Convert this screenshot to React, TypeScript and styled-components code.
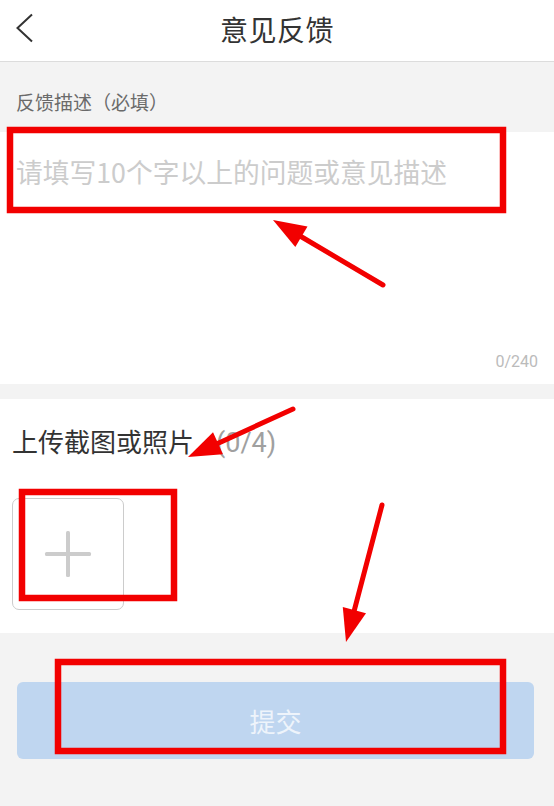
import React from "react";
import styled, { createGlobalStyle } from "styled-components";

const GlobalStyle = createGlobalStyle`
  html, body {
    margin: 0;
    padding: 0;
    background: #f3f3f3;
  }
  body {
    font-family: "Noto Sans CJK SC", "Noto Sans", sans-serif;
  }
  * { box-sizing: border-box; }
`;

const Page = styled.div`
  position: relative;
  width: 554px;
  min-height: 806px;
  background: #f3f3f3;
  display: flex;
  flex-direction: column;
  overflow: hidden;
`;

const Header = styled.header`
  position: relative;
  height: 62px;
  background: #ffffff;
  border-bottom: 1px solid #dcdcdc;
  display: flex;
  align-items: center;
  justify-content: center;
  padding-bottom: 4px;
`;

const BackButton = styled.button`
  position: absolute;
  left: 10px;
  top: 8px;
  width: 30px;
  height: 40px;
  padding: 0;
  border: none;
  background: transparent;
  display: flex;
  align-items: center;
  justify-content: center;
`;

const Title = styled.h1`
  margin: 0;
  font-size: 28px;
  font-weight: 400;
  color: #333333;
  line-height: 36px;
  letter-spacing: 0.5px;
`;

const SectionLabel = styled.div`
  height: 70px;
  padding: 27px 0 0 16px;
  font-size: 19px;
  line-height: 26px;
  color: #6a6a6a;
`;

const DescriptionCard = styled.div`
  background: #ffffff;
  height: 252px;
  display: flex;
  flex-direction: column;
  padding: 22px 16px 12px 16px;
`;

const TextArea = styled.textarea`
  flex: 1;
  border: none;
  outline: none;
  resize: none;
  padding: 0;
  margin: 0;
  background: transparent;
  font-family: "Noto Sans CJK SC", "Noto Sans", sans-serif;
  font-size: 26.75px;
  line-height: 36px;
  color: #333;
  &::placeholder {
    color: #cccccc;
  }
`;

const Counter = styled.div`
  align-self: flex-end;
  font-family: Roboto, "Noto Sans", sans-serif;
  font-size: 16px;
  line-height: 20px;
  color: #bbbbbb;
`;

const Divider = styled.div`
  height: 15px;
`;

const UploadCard = styled.div`
  background: #ffffff;
  height: 234px;
  padding: 24px 12px 0 12px;
  display: flex;
  flex-direction: column;
`;

const UploadTitle = styled.div`
  font-size: 26px;
  line-height: 36px;
  color: #333333;
`;

const UploadCount = styled.span`
  margin-left: 22px;
  font-family: Roboto, "Noto Sans", sans-serif;
  font-size: 27px;
  color: #a0a0a0;
`;

const AddBox = styled.button`
  margin-top: 37px;
  width: 112px;
  height: 112px;
  border: 1px solid #cccccc;
  border-radius: 7px;
  background: #ffffff;
  padding: 0;
  display: flex;
  align-items: center;
  justify-content: center;
`;

const Footer = styled.div`
  flex: 1;
  padding: 49px 20px 0 17px;
`;

const SubmitButton = styled.button`
  width: 100%;
  height: 77px;
  border: none;
  border-radius: 6px;
  background: #bfd6f0;
  color: #eef4fb;
  font-family: "Noto Sans CJK SC", "Noto Sans", sans-serif;
  font-size: 26px;
  display: flex;
  align-items: center;
  justify-content: center;
`;

const Annotations = styled.svg`
  position: absolute;
  left: 0;
  top: 0;
  width: 554px;
  height: 806px;
  pointer-events: none;
`;

type Arrow = { tail: [number, number]; tip: [number, number] };

const arrows: Arrow[] = [
  { tail: [383, 285], tip: [273, 220] },
  { tail: [293, 409], tip: [188, 457] },
  { tail: [382, 505], tip: [346, 642] },
];

function ArrowMark({ tail, tip }: Arrow) {
  const dx = tip[0] - tail[0];
  const dy = tip[1] - tail[1];
  const len = Math.hypot(dx, dy);
  const ux = dx / len;
  const uy = dy / len;
  const headLen = 33;
  const half = 12;
  const bx = tip[0] - ux * headLen;
  const by = tip[1] - uy * headLen;
  const px = -uy * half;
  const py = ux * half;
  return (
    <g>
      <line
        x1={tail[0]}
        y1={tail[1]}
        x2={bx + ux * 4}
        y2={by + uy * 4}
        stroke="#f20000"
        strokeWidth={5}
        strokeLinecap="round"
      />
      <polygon
        points={`${tip[0]},${tip[1]} ${bx + px},${by + py} ${bx - px},${by - py}`}
        fill="#f20000"
      />
    </g>
  );
}

export default function App() {
  return (
    <>
      <GlobalStyle />
      <Page>
        <Header>
          <BackButton aria-label="返回">
            <svg width="18" height="30" viewBox="0 0 18 30">
              <polyline
                points="16,1.5 1.5,15 16,28.5"
                fill="none"
                stroke="#333"
                strokeWidth="2"
              />
            </svg>
          </BackButton>
          <Title>意见反馈</Title>
        </Header>

        <SectionLabel>反馈描述（必填）</SectionLabel>

        <DescriptionCard>
          <TextArea placeholder="请填写10个字以上的问题或意见描述" />
          <Counter>0/240</Counter>
        </DescriptionCard>

        <Divider />

        <UploadCard>
          <UploadTitle>
            上传截图或照片<UploadCount>(0/4)</UploadCount>
          </UploadTitle>
          <AddBox aria-label="添加图片">
            <svg width="48" height="48" viewBox="0 0 48 48">
              <rect x="1" y="22" width="46" height="4" rx="1.5" fill="#cccccc" />
              <rect x="22" y="1" width="4" height="46" rx="1.5" fill="#cccccc" />
            </svg>
          </AddBox>
        </UploadCard>

        <Footer>
          <SubmitButton>提交</SubmitButton>
        </Footer>

        <Annotations viewBox="0 0 554 806">
          <rect x="10" y="130" width="493" height="80" fill="none" stroke="#f20000" strokeWidth="6.5" />
          <rect x="22" y="492" width="152" height="106" fill="none" stroke="#f20000" strokeWidth="6.5" />
          <rect x="58" y="662" width="445" height="89" fill="none" stroke="#f20000" strokeWidth="6.5" />
          {arrows.map((a, i) => (
            <ArrowMark key={i} {...a} />
          ))}
        </Annotations>
      </Page>
    </>
  );
}
